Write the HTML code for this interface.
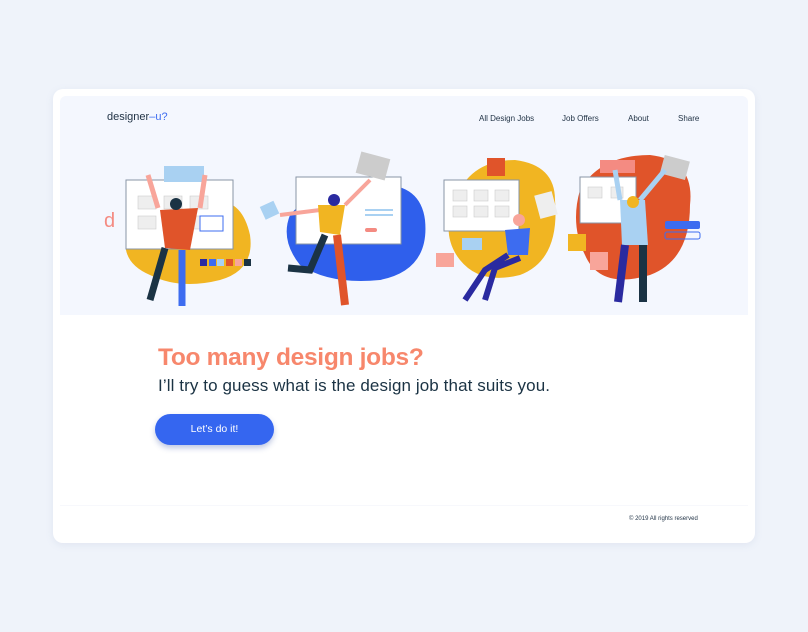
<!DOCTYPE html>
<html><head><meta charset="utf-8"><style>
*{margin:0;padding:0;box-sizing:border-box}
body{width:808px;height:632px;background:#eff3fa;font-family:"Liberation Sans",sans-serif;position:relative;overflow:hidden}
.card{position:absolute;left:53px;top:89px;width:702px;height:454px;background:#fff;border-radius:10px;box-shadow:0 2px 8px rgba(120,140,180,.12)}
.hero{position:absolute;left:60px;top:96px;width:688px;height:219px;background:#f4f7fe;border-radius:6px 6px 0 0}
.logo{position:absolute;left:107px;top:111px;font-size:11px;color:#1f3144}
.logo b{color:#3d6cf0;font-weight:normal}
.nav{position:absolute;top:114px;font-size:8px;color:#1f3144}
h1{position:absolute;left:158px;top:344px;font-size:24.5px;font-weight:bold;color:#f7876c;letter-spacing:-.3px}
.sub{position:absolute;left:158px;top:376px;font-size:17px;color:#1b3344;letter-spacing:.1px}
.btn{position:absolute;left:155px;top:414px;width:119px;height:31px;border-radius:16px;background:#3566f0;color:#fff;font-size:10.5px;text-align:center;line-height:31px;box-shadow:0 3px 6px rgba(40,70,160,.3)}
.foot{position:absolute;left:60px;top:505px;width:688px;height:1px;background:#f7f8fc}
.copy{position:absolute;left:629px;top:516px;font-size:6px;color:#1f3144}
svg{position:absolute;left:0;top:0}
</style></head><body>
<div class="card"></div>
<div class="hero"></div>
<div class="logo">designer<b>–u?</b></div>
<div class="nav" style="left:479px">All Design Jobs</div>
<div class="nav" style="left:562px">Job Offers</div>
<div class="nav" style="left:628px">About</div>
<div class="nav" style="left:678px">Share</div>
<svg width="808" height="632">
<path d="M130 225 Q150 195 200 205 Q240 190 250 235 Q255 270 220 280 Q180 290 150 275 Q115 260 130 225Z" fill="#f1b522"/>
<path d="M290 215 Q320 180 370 185 Q420 180 425 220 Q430 270 380 280 Q330 285 300 265 Q280 240 290 215Z" fill="#2f5fec"/>
<path d="M455 200 Q470 160 515 160 Q555 165 555 200 Q560 260 520 275 Q480 285 460 260 Q440 235 455 200Z" fill="#f1b522"/>
<path d="M580 190 Q600 155 650 155 Q695 160 690 205 Q690 260 650 275 Q600 290 585 255 Q570 225 580 190Z" fill="#e0542a"/>
<rect x="126" y="180" width="107" height="69" fill="#fff" stroke="#8895a5"/>
<rect x="296" y="177" width="105" height="67" fill="#fff" stroke="#8895a5"/>
<rect x="444" y="180" width="75" height="51" fill="#fff" stroke="#8895a5"/>
<rect x="580" y="177" width="56" height="46" fill="#fff" stroke="#8895a5"/>
<g fill="#eee" stroke="#ccc" stroke-width=".6">
<rect x="138" y="196" width="18" height="13"/><rect x="164" y="196" width="18" height="13"/><rect x="190" y="196" width="18" height="13"/>
<rect x="138" y="216" width="18" height="13"/><rect x="190" y="216" width="18" height="13"/>
<rect x="453" y="190" width="14" height="11"/><rect x="474" y="190" width="14" height="11"/><rect x="495" y="190" width="14" height="11"/>
<rect x="453" y="206" width="14" height="11"/><rect x="474" y="206" width="14" height="11"/><rect x="495" y="206" width="14" height="11"/>
<rect x="588" y="187" width="14" height="11"/><rect x="611" y="187" width="12" height="11"/>
</g>
<rect x="200" y="216" width="23" height="15" fill="#fff" stroke="#3d6cf0"/>
<rect x="164" y="166" width="40" height="16" fill="#a9d1f2"/>
<rect x="358" y="155" width="30" height="22" fill="#ccc" transform="rotate(15 373 166)"/>
<rect x="600" y="160" width="35" height="13" fill="#f48b82"/>
<rect x="662" y="158" width="26" height="19" fill="#ccc" transform="rotate(15 675 167)"/>
<rect x="487" y="158" width="18" height="18" fill="#e0542a"/>
<rect x="537" y="193" width="18" height="24" fill="#eee" transform="rotate(-15 546 205)"/>
<rect x="665" y="221" width="35" height="8" rx="2" fill="#3d6cf0"/>
<rect x="665" y="232" width="35" height="7" rx="2" fill="none" stroke="#3d6cf0"/>
<rect x="568" y="234" width="18" height="17" fill="#f1b522"/>
<rect x="590" y="252" width="18" height="18" fill="#f8a59a"/>
<rect x="436" y="253" width="18" height="14" fill="#f8a59a"/>
<rect x="262" y="203" width="15" height="14" fill="#a9d1f2" transform="rotate(-25 270 210)"/>
<g><rect x="200" y="259" width="7" height="7" fill="#2a2aa0"/><rect x="209" y="259" width="7" height="7" fill="#3d6cf0"/><rect x="217" y="259" width="7" height="7" fill="#a9d1f2"/><rect x="226" y="259" width="7" height="7" fill="#e0542a"/><rect x="235" y="259" width="7" height="7" fill="#f8a59a"/><rect x="244" y="259" width="7" height="7" fill="#1b3344"/></g>
<text x="104" y="227" font-size="20" fill="#f48b82" font-family="Liberation Sans">d</text>
<rect x="365" y="209" width="28" height="2" fill="#a9d1f2"/><rect x="365" y="214" width="28" height="2" fill="#a9d1f2"/><rect x="365" y="228" width="12" height="4" rx="2" fill="#f48b82"/>
<path d="M158 208 L148 175 M200 208 L205 175" stroke="#f8a59a" stroke-width="5"/>
<path d="M160 210 L198 208 L190 250 L165 248Z" fill="#e0542a"/>
<circle cx="176" cy="204" r="6" fill="#1b3344"/>
<path d="M165 248 L150 300" stroke="#1b3344" stroke-width="7"/>
<path d="M182 250 L182 306" stroke="#3d6cf0" stroke-width="7"/>
<path d="M280 215 L320 210 M345 205 L370 180" stroke="#f8a59a" stroke-width="4"/>
<path d="M318 205 L345 205 L340 235 L320 232Z" fill="#f1b522"/>
<circle cx="334" cy="200" r="6" fill="#2a2aa0"/>
<path d="M325 235 L310 270 L288 268" stroke="#1b3344" stroke-width="7" fill="none"/>
<path d="M337 235 L345 305" stroke="#e0542a" stroke-width="8"/>
<path d="M505 230 L530 228 L528 255 L508 255Z" fill="#3d6cf0"/>
<circle cx="519" cy="220" r="6" fill="#f8a59a"/>
<path d="M508 255 L485 270 L465 300 M520 258 L495 268 L485 300" stroke="#2a2aa0" stroke-width="6" fill="none"/>
<rect x="462" y="238" width="20" height="12" fill="#a9d1f2"/>
<path d="M620 200 L615 170 M640 200 L665 170" stroke="#a9d1f2" stroke-width="5"/>
<path d="M620 200 L645 200 L648 245 L622 245Z" fill="#a9d1f2"/>
<circle cx="633" cy="202" r="6" fill="#f1b522"/>
<path d="M625 245 L618 302" stroke="#2a2aa0" stroke-width="8"/>
<path d="M643 245 L643 302" stroke="#1b3344" stroke-width="8"/>
</svg>
<h1>Too many design jobs?</h1>
<div class="sub">I’ll try to guess what is the design job that suits you.</div>
<div class="btn">Let’s do it!</div>
<div class="foot"></div>
<div class="copy">© 2019 All rights reserved</div>
</body></html>
